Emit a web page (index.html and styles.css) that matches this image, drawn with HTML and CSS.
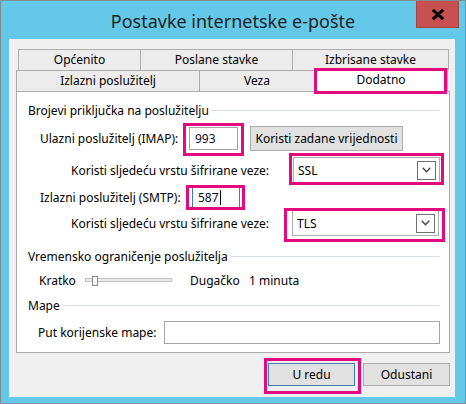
FILE: index.html
```html
<!DOCTYPE html>
<html lang="hr">
<head>
    <meta charset="UTF-8">
    <meta name="viewport" content="width=device-width, initial-scale=1.0">
    <title>Postavke internetske e-pošte</title>
    <link rel="stylesheet" href="styles.css">
</head>
<body>
    <div class="window">
        <div class="titlebar">
            <h1 class="title">Postavke internetske e-pošte</h1>
            <button type="button" class="close" aria-label="Zatvori">
                <svg width="14" height="11" viewBox="0 0 14 11">
                    <path d="M1.8 0.8 L12.2 10.2 M12.2 0.8 L1.8 10.2" stroke="#000" stroke-width="3" fill="none"/>
                </svg>
            </button>
        </div>

        <div class="client">
            <div class="tab-row back">
                <div class="tab t-opc">Općenito</div>
                <div class="tab t-sent">Poslane stavke</div>
                <div class="tab t-del">Izbrisane stavke</div>
            </div>
            <div class="tab-row front">
                <div class="tab t-out">Izlazni poslužitelj</div>
                <div class="tab t-veza">Veza</div>
                <div class="tab t-dod selected mark mark-tab">Dodatno</div>
            </div>

            <div class="panel">
                <div class="group-title">Brojevi priključka na poslužitelju</div>

                <div class="row row-imap">
                    <span class="lbl lbl-imap">Ulazni poslužitelj (IMAP):</span>
                    <span class="input port mark mark-imap">993</span>
                    <button type="button" class="btn btn-defaults">Koristi zadane vrijednosti</button>
                </div>

                <div class="row row-ssl">
                    <span class="lbl lbl-enc">Koristi sljedeću vrstu šifrirane veze:</span>
                    <span class="select mark mark-ssl">SSL<span class="arrow"><svg width="9" height="6" viewBox="0 0 9 6"><path d="M0.7 0.8 L4.5 4.8 L8.3 0.8" stroke="#444" stroke-width="1.3" fill="none"/></svg></span></span>
                </div>

                <div class="row row-smtp">
                    <span class="lbl lbl-smtp">Izlazni poslužitelj (SMTP):</span>
                    <span class="input port focused mark mark-smtp">587<span class="caret"></span></span>
                </div>

                <div class="row row-tls">
                    <span class="lbl lbl-enc2">Koristi sljedeću vrstu šifrirane veze:</span>
                    <span class="select mark mark-tls">TLS<span class="arrow"><svg width="9" height="6" viewBox="0 0 9 6"><path d="M0.7 0.8 L4.5 4.8 L8.3 0.8" stroke="#444" stroke-width="1.3" fill="none"/></svg></span></span>
                </div>

                <div class="group-title g-timeout">Vremensko ograničenje poslužitelja</div>

                <div class="row row-slider">
                    <span class="lbl lbl-short">Kratko</span>
                    <span class="slider"><span class="thumb"></span></span>
                    <span class="lbl lbl-long">Dugačko</span>
                    <span class="lbl">1 minuta</span>
                </div>

                <div class="group-title g-folders">Mape</div>

                <div class="row row-root">
                    <span class="lbl lbl-root">Put korijenske mape:</span>
                    <span class="input root"></span>
                </div>
            </div>

            <div class="actions">
                <button type="button" class="btn btn-action default mark mark-ok">U redu</button>
                <button type="button" class="btn btn-action">Odustani</button>
            </div>
        </div>
    </div>
</body>
</html>
```

FILE: styles.css
```css
* {
    box-sizing: border-box;
}

body {
    margin: 0;
    font-family: "Noto Sans", sans-serif;
    font-size: 12px;
    color: #000;
}

.window {
    width: 466px;
    height: 404px;
    background-color: #64c9e9;
    border: 1px solid #7f8d94;
    display: flex;
    flex-direction: column;
}

/* title bar */
.titlebar {
    height: 38px;
    display: grid;
    grid-template-columns: 1fr auto 1fr;
    align-items: start;
}

.title {
    grid-column: 2;
    margin: 0;
    font-size: 18px;
    font-weight: normal;
    line-height: 41px;
    color: #222;
}

.close {
    grid-column: 3;
    justify-self: end;
    width: 43px;
    height: 27px;
    margin-right: 6px;
    padding: 0;
    background-color: #c75050;
    border: 1px solid #a94444;
    border-top: none;
    display: flex;
    align-items: center;
    justify-content: center;
}

/* client area */
.client {
    flex: 1;
    margin: 0 10px 6px 8px;
    padding: 10px 5px 0 7px;
    background-color: #f0f0f0;
}

.tab-row {
    display: flex;
    height: 21px;
}

.tab-row.back {
    margin-left: 2px;
}

.tab {
    height: 21px;
    margin-right: -1px;
    border: 1px solid #adadad;
    border-bottom: none;
    background-color: #ececec;
    text-align: center;
    line-height: 19px;
}

.t-opc { width: 123px; }
.t-sent { width: 153px; }
.t-del { width: 157px; }
.t-out { width: 184px; }
.t-veza { width: 116px; }
.t-dod { width: 134px; }

.tab.selected {
    position: relative;
    z-index: 1;
    height: 23px;
    margin-top: -2px;
    margin-bottom: -1px;
    background-color: #fff;
    line-height: 21px;
}

/* highlight boxes */
.mark {
    position: relative;
}

.mark::after {
    content: "";
    position: absolute;
    border: 3px solid #e4097f;
    pointer-events: none;
}

.mark-tab::after { inset: -1px 0 -3px -1px; }
.mark-imap::after { inset: -5px -7px -7px -7px; }
.mark-ssl::after { inset: -5px -5px -3px -5px; }
.mark-smtp::after { inset: -2px -6px -3px -7px; }
.mark-tls::after { inset: -3px -7px -7px -9px; }
.mark-ok::after { inset: -6px -7px -9px -5px; }

/* tab page */
.panel {
    width: 434px;
    height: 262px;
    padding: 9px 9px 0 11px;
    background-color: #fff;
    border: 1px solid #acacac;
}

.group-title {
    display: flex;
    align-items: center;
    gap: 3px;
    height: 18px;
    white-space: nowrap;
}

.group-title::after {
    content: "";
    flex: 1;
    height: 1px;
    background-color: #d5dce0;
}

.g-timeout { margin-top: 11px; }
.g-folders { margin-top: 7px; }

.row {
    display: flex;
    align-items: center;
}

.lbl {
    white-space: nowrap;
}

.row-imap { margin-top: 7px; height: 25px; margin-left: 12px; }
.row-ssl { margin-top: 6px; height: 26px; margin-left: 43px; }
.row-smtp { margin-top: 3px; height: 22px; margin-left: 12px; }
.row-tls { margin-top: 2px; height: 26px; margin-left: 43px; }
.row-slider { margin-top: 6px; height: 18px; margin-left: 11px; }
.row-root { margin-top: 7px; height: 23px; margin-left: 10px; }

.lbl-imap { width: 149px; }
.lbl-smtp { width: 152px; }
.lbl-enc { width: 222px; }
.lbl-enc2 { width: 221px; }
.lbl-short { width: 46px; }
.lbl-long { width: 59px; margin-left: 18px; }
.lbl-root { width: 126px; }

.input {
    display: flex;
    align-items: center;
    height: 23px;
    padding-left: 5px;
    background-color: #fff;
    border: 1px solid #a5a5a5;
    color: #0a0a2a;
}

.port { width: 49px; }

.input.focused {
    width: 48px;
    height: 22px;
    border-color: #3c7fb1;
}

.caret {
    width: 1px;
    height: 15px;
    margin-left: 1px;
    background-color: #000;
}

.root { width: 276px; }

.select {
    display: flex;
    align-items: center;
    justify-content: space-between;
    width: 147px;
    height: 26px;
    padding: 0 3px 0 4px;
    background-color: #fff;
    border: 1px solid #acacac;
}

.arrow {
    display: flex;
    align-items: center;
    justify-content: center;
    width: 19px;
    height: 19px;
    border: 1px solid #707070;
    background-color: #fff;
}

.btn {
    font-family: inherit;
    font-size: 12px;
    color: #000;
    background-color: #e1e1e1;
    border: 1px solid #adadad;
    padding: 0;
}

.btn-defaults {
    width: 153px;
    height: 25px;
    margin-left: 12px;
}

.slider {
    position: relative;
    width: 87px;
    height: 4px;
    background-color: #e7eaea;
    border: 1px solid #c3c3c3;
}

.thumb {
    position: absolute;
    left: 6px;
    top: -3px;
    width: 6px;
    height: 10px;
    background-color: #f4f4f4;
    border: 1px solid #8a8a8a;
}

/* dialog buttons */
.actions {
    display: flex;
    justify-content: flex-end;
    gap: 8px;
    margin-top: 10px;
}

.btn-action {
    width: 87px;
    height: 23px;
}

.btn-action.default {
    border-color: #3c7fb1;
}
```
